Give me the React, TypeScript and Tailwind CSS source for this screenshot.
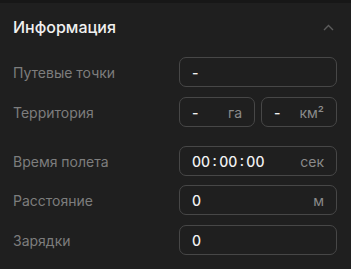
import React from 'react';

function Field({ value, unit, className = '' }: { value: string; unit?: string; className?: string }) {
    return (
        <div className={`h-[30px] flex items-center justify-between px-[12px] border border-[#474747] rounded-[7px] ${className}`}>
            <span className="text-[14px] text-[#f2f2f2] font-medium">{value}</span>
            {unit && <span className="text-[14px] text-[#8a8a8a]">{unit}</span>}
        </div>
    );
}

export default function App() {
    const font = { fontFamily: 'Inter, "Noto Sans", sans-serif' };

    return (
        <div className="w-[351px] h-[269px] bg-[#1f1f1f] overflow-hidden" style={font}>
            <div className="h-[3px] bg-[#171717]" />

            {/* Header */}
            <div className="h-[48px] pl-[13px] pr-[17px] flex items-center justify-between">
                <h2 className="text-[16px] font-medium text-[#f0f0f0]">Информация</h2>
                <svg width="11" height="7" viewBox="0 0 11 7" fill="none">
                    <path d="M1 6L5.5 1.5L10 6" stroke="#5c5c5c" strokeWidth="1.4" />
                </svg>
            </div>

            {/* Rows */}
            <div className="mt-[6px] pl-[13px] pr-[14px] flex flex-col">
                <div className="grid grid-cols-[166px_1fr] items-center">
                    <span className="text-[14px] text-[#7d7d7d]">Путевые точки</span>
                    <Field value="-" />
                </div>
                <div className="grid grid-cols-[166px_1fr] items-center mt-[10px]">
                    <span className="text-[14px] text-[#7d7d7d]">Территория</span>
                    <div className="grid grid-cols-2 gap-[6px]">
                        <Field value="-" unit="га" />
                        <Field value="-" unit="км²" />
                    </div>
                </div>
                <div className="grid grid-cols-[166px_1fr] items-center mt-[19px]">
                    <span className="text-[14px] text-[#7d7d7d]">Время полета</span>
                    <Field value={'00\u2009:\u200900\u2009:\u200900'} unit="сек" />
                </div>
                <div className="grid grid-cols-[166px_1fr] items-center mt-[9px]">
                    <span className="text-[14px] text-[#7d7d7d]">Расстояние</span>
                    <Field value="0" unit="м" />
                </div>
                <div className="grid grid-cols-[166px_1fr] items-center mt-[10px]">
                    <span className="text-[14px] text-[#7d7d7d]">Зарядки</span>
                    <Field value="0" />
                </div>
            </div>
        </div>
    );
}
